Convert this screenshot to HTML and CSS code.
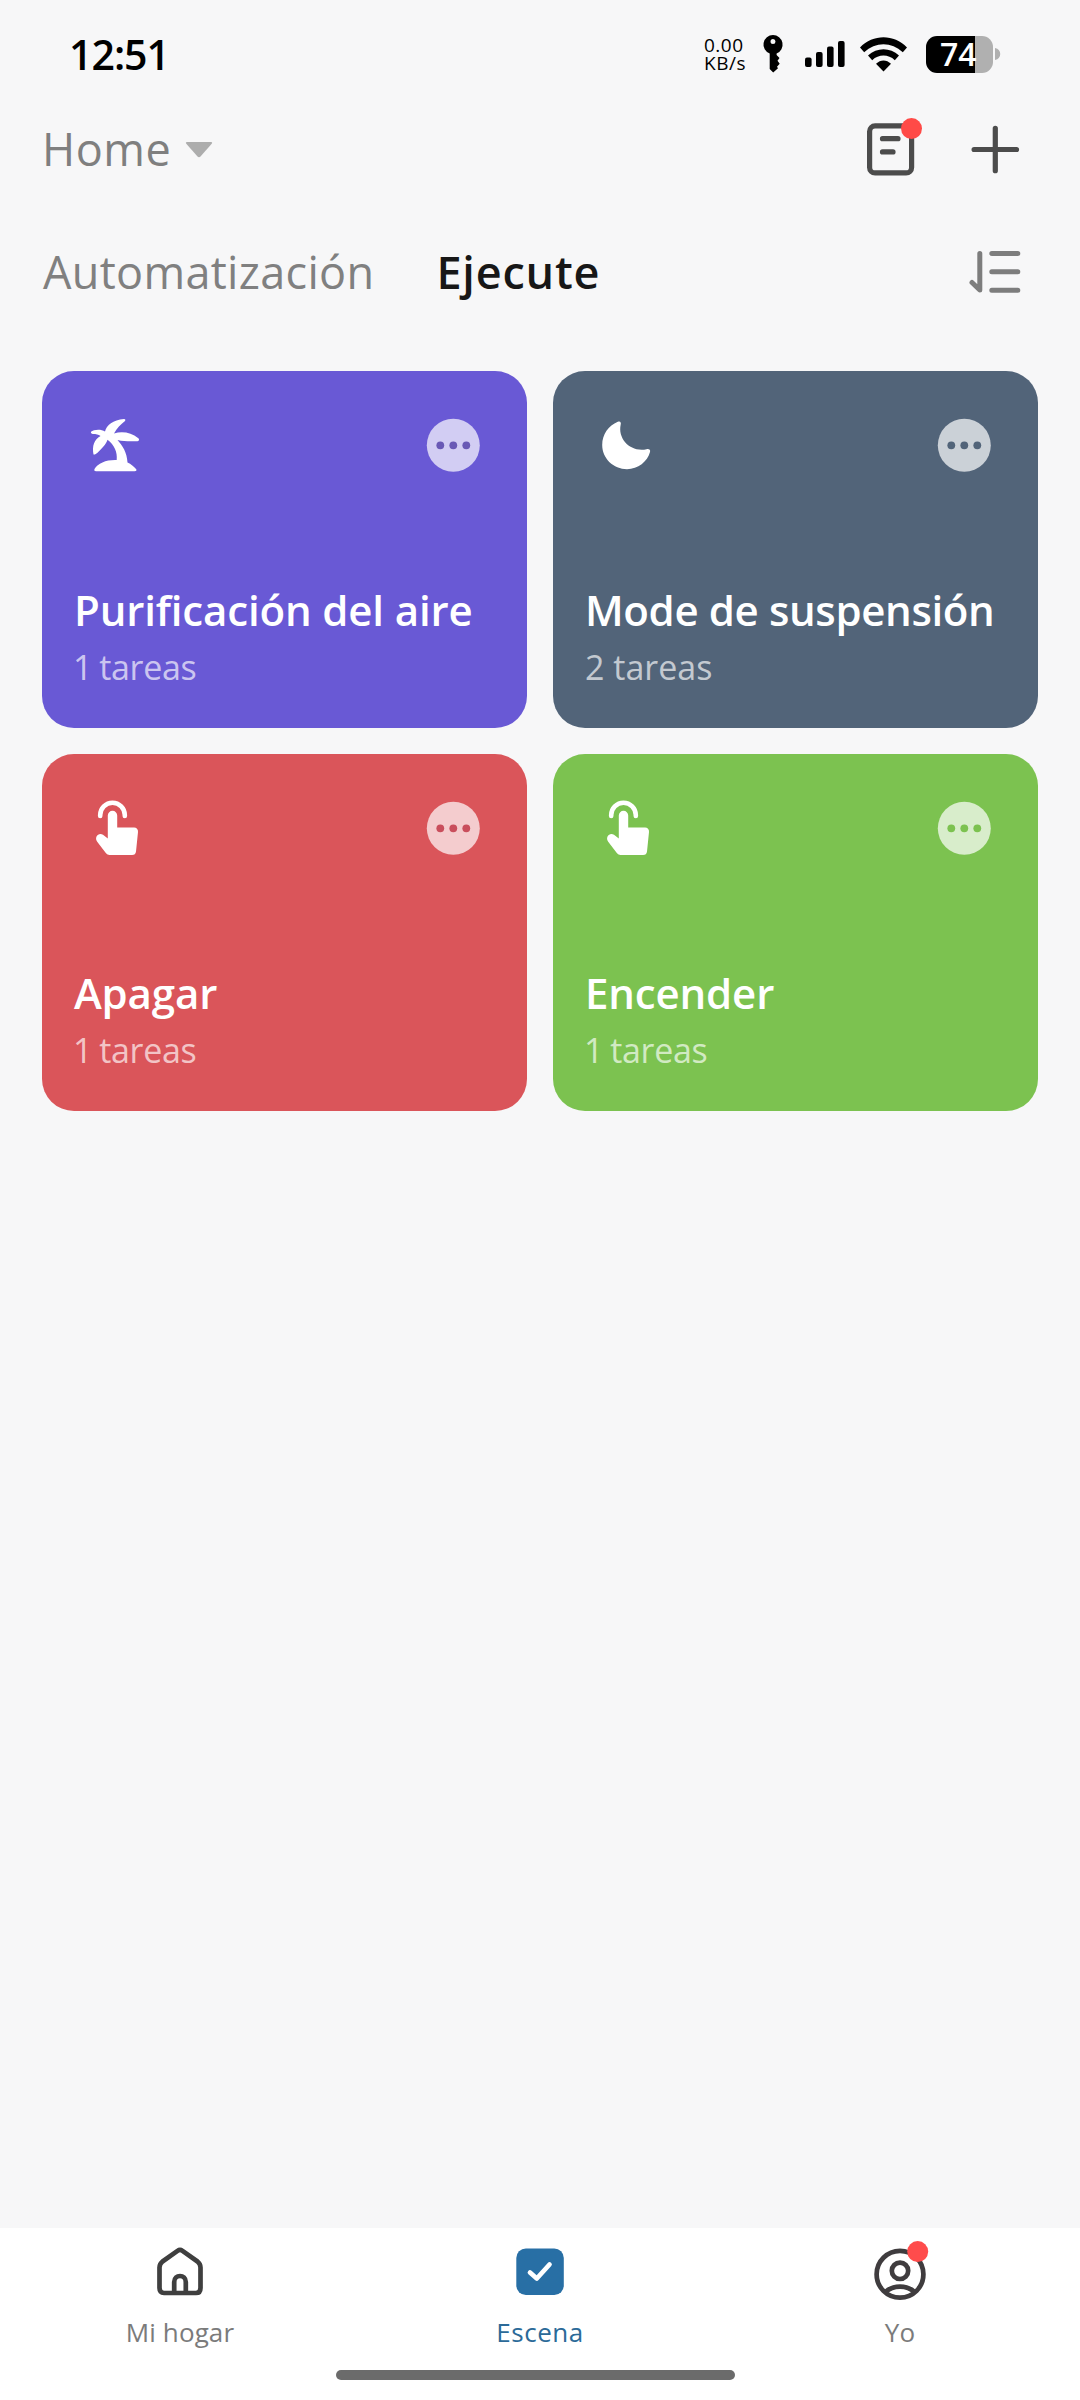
FILE: index.html
```html
<!DOCTYPE html>
<html lang="es">
<head>
<meta charset="utf-8">
<title>Escena</title>
<link rel="stylesheet" href="styles.css">
</head>
<body>
<svg class="defs" aria-hidden="true">
  <symbol id="i-more" viewBox="0 0 54 54">
    <circle class="more-disc" cx="27.300" cy="27.300" r="26.500"/>
    <g fill="currentColor"><circle cx="14.300" cy="27.300" r="3.900"/><circle cx="27.300" cy="27.300" r="3.900"/><circle cx="40.300" cy="27.300" r="3.900"/></g>
  </symbol>
  <symbol id="i-tap" viewBox="0 0 60 60">
    <path d="M19.200 19V18a12.300 12.300 0 0 1 24.600 0V19" fill="none" stroke="#fff" stroke-width="4.600" stroke-linecap="round"/>
    <path d="M26.800 18.500a4.700 4.700 0 0 1 9.400 0V30.500H53a4 4 0 0 1 4 4.500L55 54.500a4 4 0 0 1-4 3.500H28.500a4.500 4.500 0 0 1-3.500-1.700L16.200 44.700C13 40 17.500 35 22 37.700L26.800 41.500Z" fill="#fff"/>
  </symbol>
</svg>
<div class="screen">
  <header class="status">
    <span class="clock">12:51</span>
    <div class="status-right">
      <div class="speed">0.00<br>KB/s</div>
      <svg class="key" width="20" height="38" viewBox="0 0 20 38"><path fill-rule="evenodd" d="M10 0a9.600 9.600 0 0 1 3.600 18.500V20l2.900 3-2 2.700 2.200 3-2.700 3 1 1.500L10.200 37.500 6.700 34V18.600A9.600 9.600 0 0 1 10 0ZM10 4.100a2.500 2.500 0 1 0 0 5 2.500 2.500 0 0 0 0-5Z"/></svg>
      <svg class="signal" width="40" height="26" viewBox="0 0 40 26"><rect x="0" y="16.500" width="6.600" height="9.500" rx="2"/><rect x="11" y="11" width="6.600" height="15" rx="2"/><rect x="22" y="5.500" width="6.600" height="20.500" rx="2"/><rect x="33" y="0" width="6.600" height="26" rx="2"/></svg>
      <svg class="wifi" width="47" height="35" viewBox="0 0 47 35"><path d="M0 10.500C13-3.200 34-3.200 47 10.500L42.800 15.200C31.500 4.500 15.500 4.500 4.200 15.200Z"/><path d="M8 18.500C17 10.200 30 10.200 39 18.500L34.800 23.200C28.300 17 18.700 17 12.200 23.200Z"/><path d="M16 26.800C20.500 22.300 26.500 22.300 31 26.800L23.500 34.500Z"/></svg>
      <div class="battery"><div class="cell"><span>74</span></div><svg width="6" height="12" viewBox="0 0 6 12"><path d="M0 0C7 1 7 11 0 12Z" fill="#b0b0b0"/></svg></div>
    </div>
  </header>
  <div class="topbar">
    <div class="home-pick"><span>Home</span><svg width="28" height="17" viewBox="0 0 28 17"><path d="M2 1H26Q28 1 26.500 3L15.500 15.500Q14 17 12.500 15.500L1.500 3Q0 1 2 1Z" fill="#adadad"/></svg></div>
    <div class="actions">
      <svg width="56" height="58" viewBox="0 0 56 58"><rect x="2.600" y="5.900" width="42" height="47" rx="5.500" fill="none" stroke="#4c4c4c" stroke-width="5.200"/><path d="M15.500 18.700H31M15.500 31.900H26" stroke="#4c4c4c" stroke-width="5.200" stroke-linecap="round"/><circle cx="44.500" cy="8.600" r="10.500" fill="#ff4a47"/></svg>
      <svg width="48" height="48" viewBox="0 0 48 48"><path d="M2.100 24.500H44.500M23.300 3.300V45.700" stroke="#4c4c4c" stroke-width="5.200" stroke-linecap="round"/></svg>
    </div>
  </div>
  <nav class="tabs">
    <span class="tab">Automatización</span>
    <span class="tab on">Ejecute</span>
    <svg class="sort" width="52" height="44" viewBox="0 0 52 44"><path d="M9.800 3.500V40L2 32.500M21.800 3.500H47.800M21.800 21.800H47.800M21.800 40.200H47.800" fill="none" stroke="#7d7d7d" stroke-width="5" stroke-linecap="round" stroke-linejoin="round"/></svg>
  </nav>
  <main class="grid">
    <article class="card violet">
      <div class="card-top">
        <svg width="60" height="60" viewBox="0 0 60 60" fill="#fff"><path d="M43 5C32 6 25.500 11 24 17.500 20 14.800 12.500 15.500 10 17.800 9.500 19 10.500 20 12 20 15 20 17.500 20.600 19.500 22 13 25.500 11 32 12.500 40.500 14.500 41.500 19.500 36 22 33 24.500 30 26 27.500 26.500 25.700 33.500 31 36.500 38 35.700 46 25.500 45.600 17 49 13.500 55 13 56.500 13.500 57.200 15 57.200H53.500C55.500 57.200 56 56.200 55 55 53 52.500 50 50 46.500 48.500 46 38.500 41.500 31.500 36.500 26 43 27.500 49.500 27.500 56.500 27.200 58.500 26.800 58.500 25 57 24 50.500 18.500 41 17 33 19.500 36 14 39.500 10.500 44 7Q45 5 43 5Z"/></svg>
        <svg class="more" width="54" height="54"><use href="#i-more"/></svg>
      </div>
      <h2 class="long">Purificación del aire</h2><p class="one">1 tareas</p>
    </article>
    <article class="card slate">
      <div class="card-top">
        <svg width="60" height="60" viewBox="0 0 60 60" fill="#fff"><path d="M25.800 7.800C28.200 6.700 29.300 8.500 28.700 10.500 25.500 25 38.500 38.500 54.500 35.200 57 34.700 58.700 35.700 58 38C55.500 47.500 46 55.200 35 55.200 21.500 55.200 10.200 44.500 10.200 31 10.200 20.500 16.500 11.500 25.800 7.800Z"/></svg>
        <svg class="more" width="54" height="54"><use href="#i-more"/></svg>
      </div>
      <h2 class="longer">Mode de suspensión</h2><p>2 tareas</p>
    </article>
    <article class="card red">
      <div class="card-top">
        <svg width="60" height="60"><use href="#i-tap"/></svg>
        <svg class="more" width="54" height="54"><use href="#i-more"/></svg>
      </div>
      <h2>Apagar</h2><p class="one">1 tareas</p>
    </article>
    <article class="card green">
      <div class="card-top">
        <svg width="60" height="60"><use href="#i-tap"/></svg>
        <svg class="more" width="54" height="54"><use href="#i-more"/></svg>
      </div>
      <h2>Encender</h2><p class="one">1 tareas</p>
    </article>
  </main>
  <footer class="bottom">
    <div class="nav">
      <div class="nav-item"><svg width="60" height="60" viewBox="0 0 60 60" fill="none" stroke="#3f3f3f" stroke-width="4.700" stroke-linejoin="round"><path d="M27.500 12.800Q30 11 32.500 12.800L47.500 23.500Q50.500 26 50.500 29.500V50Q50.500 55 46 55H14Q9.500 55 9.500 50V29.500Q9.500 26 12.500 23.500Z"/><path d="M24.200 54.500V44C24.200 36 35.800 36 35.800 44V54.500"/></svg><span>Mi hogar</span></div>
      <div class="nav-item on"><svg width="60" height="60" viewBox="0 0 60 60"><rect x="6.300" y="10.500" width="47.500" height="46.500" rx="9.500" fill="#286fa5"/><path d="M20 34.500L26.800 40.500L39.500 26.500" fill="none" stroke="#fff" stroke-width="4.700" stroke-linecap="round" stroke-linejoin="round"/></svg><span>Escena</span></div>
      <div class="nav-item"><svg width="60" height="60" viewBox="0 0 60 60"><g fill="none" stroke="#3f3c3e" stroke-width="4.700"><circle cx="30" cy="36.300" r="23.400"/><circle cx="30" cy="32.800" r="8.200"/><path d="M15.500 54C23 46.700 37 46.700 44.500 54"/></g><circle cx="47.700" cy="13.600" r="10.500" fill="#ff4c4c"/></svg><span>Yo</span></div>
    </div>
    <div class="pill"></div>
  </footer>
</div>
</body>
</html>
```
FILE: styles.css
```css
* { box-sizing: border-box; margin: 0; padding: 0; }
body { background: #f7f7f7; font-family: "Open Sans", "Noto Sans", sans-serif; }
svg { display: block; flex: none; overflow: visible; }
.defs { width: 0; height: 0; position: absolute; }
.screen { width: 1080px; height: 2400px; display: flex; flex-direction: column; background: #f7f7f8; overflow: hidden; white-space: nowrap; }

.status { height: 108px; display: flex; justify-content: space-between; padding: 0 79px 0 69px; color: #000; }
.clock { font-size: 41px; font-weight: 600; line-height: 108px; letter-spacing: -1px; }
.status-right { display: flex; align-items: center; height: 108px; }
.speed { width: 41px; margin-right: 18px; font-size: 19px; font-weight: 500; line-height: 18px; letter-spacing: .5px; }
.key { margin-right: 22px; }
.signal { margin-right: 15px; }
.wifi { margin-right: 19px; }
.battery { display: flex; align-items: center; gap: 2px; }
.cell { width: 67px; height: 37px; border-radius: 11px; background: linear-gradient(90deg, #000 49px, #b0b0b0 49px); color: #fff; font-size: 32px; font-weight: 600; line-height: 36px; padding-left: 14px; }

.topbar { height: 82px; display: flex; justify-content: space-between; align-items: center; padding: 0 60px 0 42px; }
.home-pick { display: flex; align-items: center; gap: 14px; font-size: 45px; color: #7f7f7f; line-height: 82px; letter-spacing: .5px; }
.actions { display: flex; align-items: center; gap: 49px; }

.tabs { height: 181px; padding: 41px 58px 0 43px; display: flex; align-items: flex-start; font-size: 45px; line-height: 82px; letter-spacing: .32px; color: #808080; }
.tab.on { color: #171717; font-weight: 600; letter-spacing: .8px; margin-left: 62px; }
.sort { margin: 19px 0 0 auto; }

.grid { display: grid; grid-template-columns: 485px 485px; gap: 26px; padding: 0 42px; }
.card { height: 357px; border-radius: 32px; padding: 43px 47px 0 32px; color: #fff; }
.card-top { height: 60px; display: flex; justify-content: space-between; padding-left: 7px; }
.more { margin-top: 4px; }
.more-disc { fill: #fff; fill-opacity: .7; }
.card h2 { font-size: 42px; font-weight: 600; line-height: 56px; margin-top: 108px; letter-spacing: -.15px; }
.card h2.longer { letter-spacing: -.36px; }
.card p { font-size: 34px; line-height: 48px; margin-top: 5px; color: rgba(255,255,255,.67); }
.card p.one { letter-spacing: -.3px; word-spacing: -1.500px; margin-left: -1px; }
.violet { background: #6959d5; }
.slate { background: #526479; }
.red { background: #da555a; }
.green { background: #7cc250; }
.violet .more { color: #6959b5; }
.slate .more { color: #526479; }
.red .more { color: #c94e5c; }
.green .more { color: #7cc250; }

.bottom { margin-top: auto; height: 172px; background: #fff; display: flex; flex-direction: column; align-items: center; }
.nav { width: 1080px; height: 142px; display: grid; grid-template-columns: repeat(3, 1fr); padding-top: 10px; }
.nav-item { display: flex; flex-direction: column; align-items: center; color: #7b7b7b; font-size: 26px; line-height: 36px; letter-spacing: .1px; gap: 16px; }
.nav-item.on { color: #2b6a98; letter-spacing: .5px; }
.pill { width: 399px; height: 10px; margin-right: 9px; border-radius: 5px; background: #6b6b6b; }
```
